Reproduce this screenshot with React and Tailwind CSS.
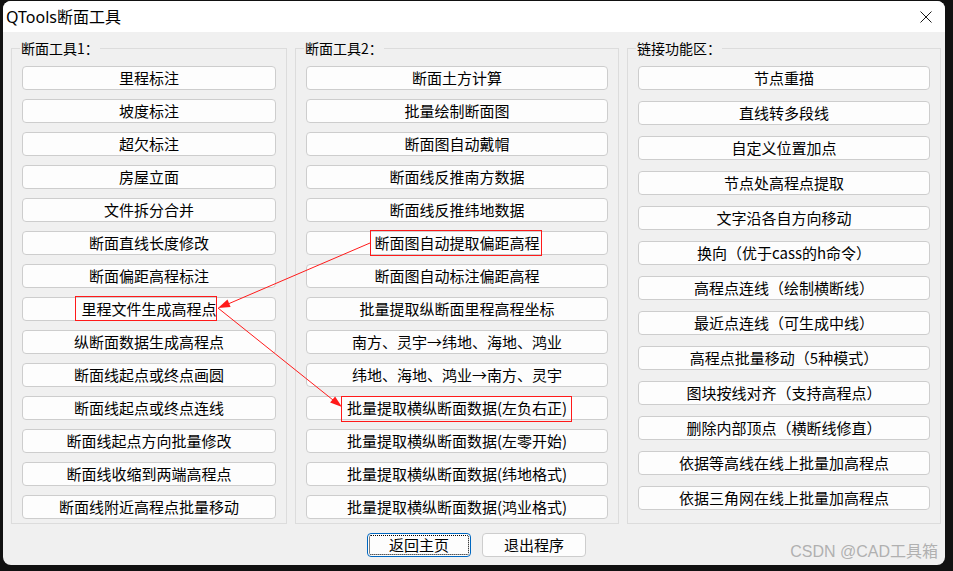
import React from 'react';

// --- DATA ---
const groups = [
  {
    title: '断面工具1：',
    width: 'w-[276px]',
    gap: 'gap-[9px]',
    items: [
      '里程标注', '坡度标注', '超欠标注', '房屋立面', '文件拆分合并', '断面直线长度修改',
      '断面偏距高程标注', '里程文件生成高程点', '纵断面数据生成高程点', '断面线起点或终点画圆',
      '断面线起点或终点连线', '断面线起点方向批量修改', '断面线收缩到两端高程点', '断面线附近高程点批量移动',
    ],
  },
  {
    title: '断面工具2：',
    width: 'w-[324px]',
    gap: 'gap-[9px]',
    items: [
      '断面土方计算', '批量绘制断面图', '断面图自动戴帽', '断面线反推南方数据', '断面线反推纬地数据',
      '断面图自动提取偏距高程', '断面图自动标注偏距高程', '批量提取纵断面里程高程坐标',
      '南方、灵宇→纬地、海地、鸿业', '纬地、海地、鸿业→南方、灵宇',
      '批量提取横纵断面数据(左负右正)', '批量提取横纵断面数据(左零开始)',
      '批量提取横纵断面数据(纬地格式)', '批量提取横纵断面数据(鸿业格式)',
    ],
  },
  {
    title: '链接功能区：',
    width: 'w-[314px]',
    gap: 'gap-[11px]',
    items: [
      '节点重描', '直线转多段线', '自定义位置加点', '节点处高程点提取', '文字沿各自方向移动',
      '换向（优于cass的h命令）', '高程点连线（绘制横断线）', '最近点连线（可生成中线）',
      '高程点批量移动（5种模式）', '图块按线对齐（支持高程点）', '删除内部顶点（横断线修直）',
      '依据等高线在线上批量加高程点', '依据三角网在线上批量加高程点',
    ],
  },
];

const font = 'font-["Noto_Sans_CJK_SC",sans-serif]';

function Btn({ label }) {
  return (
    <div className="h-[24px] rounded-[4px] border border-[#cdcdcd] bg-[#fdfdfd] flex items-center justify-center pb-[1px] text-[15px] leading-none text-black">
      {label}
    </div>
  );
}

function Group({ g }) {
  return (
    <div className={`relative ${g.width} border border-[#dcdcdc] px-[10px] pt-[17px] pb-[4px]`}>
      <span className="absolute left-[8px] -top-[10px] bg-[#f0f0f0] px-[1px] text-[14px] leading-[18px] text-black">
        {g.title}
      </span>
      <div className={`flex flex-col ${g.gap}`}>
        {g.items.map(t => <Btn key={t} label={t} />)}
      </div>
    </div>
  );
}

export default function App() {
  return (
    <div className={`relative w-[953px] h-[571px] bg-[#111] pt-[1px] pl-[3px] ${font}`}>
      <div className="relative w-[942px] h-[564px] rounded-[8px] overflow-hidden bg-[#f0f0f0]">
        {/* title bar */}
        <div className="h-[31px] bg-white flex items-center justify-between pl-[3px] pr-[13px]">
          <span className='text-[16px] text-black font-["Noto_Sans","Noto_Sans_CJK_SC",sans-serif]'>QTools断面工具</span>
          <svg width="12" height="12" viewBox="0 0 12 12">
            <path d="M0.5 0.5 L11.5 11.5 M11.5 0.5 L0.5 11.5" stroke="#1a1a1a" strokeWidth="1" />
          </svg>
        </div>

        {/* groups */}
        <div className="flex gap-[8px] pl-[8px] pt-[16px]">
          {groups.map(g => <Group key={g.title} g={g} />)}
        </div>

        {/* bottom buttons */}
        <div className="flex gap-[11px] pl-[364px] mt-[9px]">
          <div className="w-[104px] h-[24px] rounded-[4px] border border-[#0067c0] bg-[#fdfdfd] flex items-center justify-center pb-[1px] text-[15px] leading-none outline-1 outline-dotted outline-black outline-offset-[-3px]">
            返回主页
          </div>
          <div className="w-[104px] h-[24px] rounded-[4px] border border-[#cdcdcd] bg-[#fdfdfd] flex items-center justify-center pb-[1px] text-[15px] leading-none">
            退出程序
          </div>
        </div>

        {/* watermark */}
        <span className='absolute right-[7px] bottom-[1px] text-[16px] text-[#b0b0b0] font-["Liberation_Sans","Noto_Sans_CJK_SC",sans-serif]'>
          CSDN @CAD工具箱
        </span>
      </div>

      {/* red annotations */}
      <svg className="absolute inset-0 pointer-events-none" width="953" height="571">
        <g fill="none" stroke="#ff1a1a" strokeWidth="1">
          <rect x="370.5" y="230.5" width="171" height="25" />
          <rect x="75.5" y="296.5" width="141" height="24" />
          <rect x="341.5" y="396.5" width="230" height="25" />
          <line x1="370" y1="243" x2="228" y2="304" />
          <line x1="218" y1="308" x2="333" y2="400" />
        </g>
        <g fill="#ff1a1a">
          <polygon points="218,308 230.6,307 227.5,299.6" />
          <polygon points="342,407 330.1,402.6 335.1,396.4" />
        </g>
      </svg>
    </div>
  );
}
